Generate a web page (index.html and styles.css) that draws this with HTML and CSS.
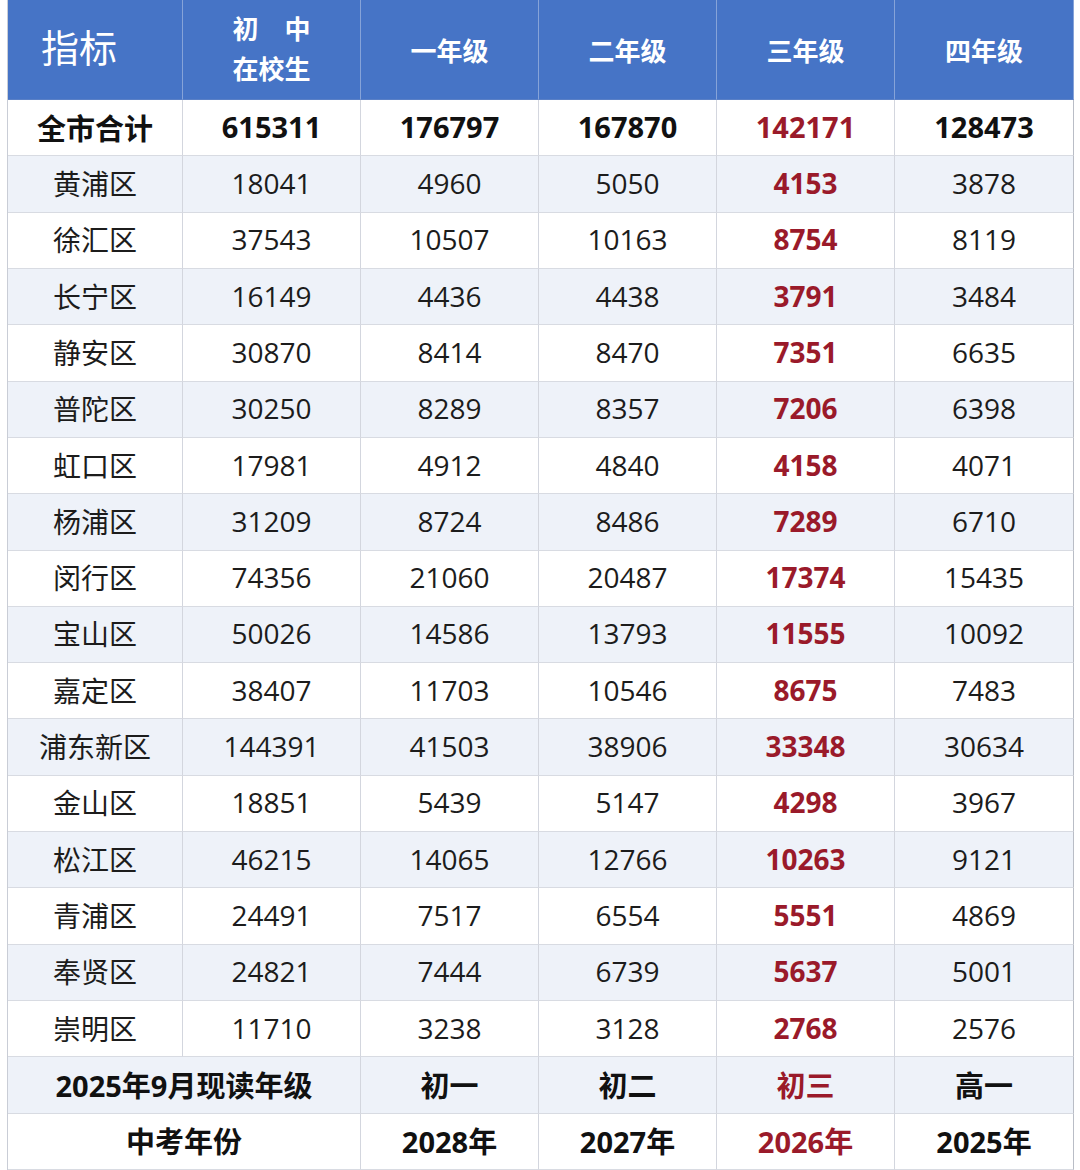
FILE: index.html
```html
<!DOCTYPE html>
<html lang="zh-CN">
<head>
<meta charset="utf-8">
<link rel="stylesheet" href="styles.css">
</head>
<body>
<div class="sheet">
  <div class="c h first">指标</div>
  <div class="c h two"><span>初　中</span><span>在校生</span></div>
  <div class="c h">一年级</div>
  <div class="c h">二年级</div>
  <div class="c h">三年级</div>
  <div class="c h last">四年级</div>

  <div class="c b">全市合计</div><div class="c b">615311</div><div class="c b">176797</div><div class="c b">167870</div><div class="c b red">142171</div><div class="c b last">128473</div>

  <div class="c s">黄浦区</div><div class="c s">18041</div><div class="c s">4960</div><div class="c s">5050</div><div class="c s red">4153</div><div class="c s last">3878</div>
  <div class="c">徐汇区</div><div class="c">37543</div><div class="c">10507</div><div class="c">10163</div><div class="c red">8754</div><div class="c last">8119</div>
  <div class="c s">长宁区</div><div class="c s">16149</div><div class="c s">4436</div><div class="c s">4438</div><div class="c s red">3791</div><div class="c s last">3484</div>
  <div class="c">静安区</div><div class="c">30870</div><div class="c">8414</div><div class="c">8470</div><div class="c red">7351</div><div class="c last">6635</div>
  <div class="c s">普陀区</div><div class="c s">30250</div><div class="c s">8289</div><div class="c s">8357</div><div class="c s red">7206</div><div class="c s last">6398</div>
  <div class="c">虹口区</div><div class="c">17981</div><div class="c">4912</div><div class="c">4840</div><div class="c red">4158</div><div class="c last">4071</div>
  <div class="c s">杨浦区</div><div class="c s">31209</div><div class="c s">8724</div><div class="c s">8486</div><div class="c s red">7289</div><div class="c s last">6710</div>
  <div class="c">闵行区</div><div class="c">74356</div><div class="c">21060</div><div class="c">20487</div><div class="c red">17374</div><div class="c last">15435</div>
  <div class="c s">宝山区</div><div class="c s">50026</div><div class="c s">14586</div><div class="c s">13793</div><div class="c s red">11555</div><div class="c s last">10092</div>
  <div class="c">嘉定区</div><div class="c">38407</div><div class="c">11703</div><div class="c">10546</div><div class="c red">8675</div><div class="c last">7483</div>
  <div class="c s">浦东新区</div><div class="c s">144391</div><div class="c s">41503</div><div class="c s">38906</div><div class="c s red">33348</div><div class="c s last">30634</div>
  <div class="c">金山区</div><div class="c">18851</div><div class="c">5439</div><div class="c">5147</div><div class="c red">4298</div><div class="c last">3967</div>
  <div class="c s">松江区</div><div class="c s">46215</div><div class="c s">14065</div><div class="c s">12766</div><div class="c s red">10263</div><div class="c s last">9121</div>
  <div class="c">青浦区</div><div class="c">24491</div><div class="c">7517</div><div class="c">6554</div><div class="c red">5551</div><div class="c last">4869</div>
  <div class="c s">奉贤区</div><div class="c s">24821</div><div class="c s">7444</div><div class="c s">6739</div><div class="c s red">5637</div><div class="c s last">5001</div>
  <div class="c">崇明区</div><div class="c">11710</div><div class="c">3238</div><div class="c">3128</div><div class="c red">2768</div><div class="c last">2576</div>

  <div class="c s b span2">2025年9月现读年级</div><div class="c s b">初一</div><div class="c s b">初二</div><div class="c s b red">初三</div><div class="c s b last">高一</div>
  <div class="c b span2">中考年份</div><div class="c b">2028年</div><div class="c b">2027年</div><div class="c b red">2026年</div><div class="c b last">2025年</div>
</div>
</body>
</html>
```
FILE: styles.css
```css
html, body {
  margin: 0;
  padding: 0;
  background: #ffffff;
}
body {
  width: 1080px;
  height: 1170px;
  overflow: hidden;
  font-family: "Open Sans", "Noto Sans CJK SC", sans-serif;
}
.sheet {
  margin-left: 7px;
  width: 1066px;
  height: 1170px;
  display: grid;
  grid-template-columns: 175px 178px 178px 178px 178px 179px;
  grid-template-rows: 100px repeat(19, 1fr);
  border-left: 1.5px solid #c9cdd6;
  box-sizing: border-box;
}
.c {
  display: flex;
  align-items: center;
  justify-content: center;
  border-right: 1.5px solid #d3d6de;
  border-bottom: 1.5px solid #d8dbe2;
  font-size: 28px;
  color: #1c1c1c;
  background: #ffffff;
  white-space: nowrap;
  padding-bottom: 2px;
  box-sizing: border-box;
}
.c.last {
  border-right-color: #b9bdc6;
}
.s {
  background: #eef2f9;
}
.h {
  background: #4674c6;
  color: #ffffff;
  font-family: "Noto Sans CJK SC", sans-serif;
  font-weight: 700;
  font-size: 26px;
  border-right: 1.5px solid #86a3d8;
  border-bottom: 1px solid #5a80c6;
  padding-bottom: 0;
}
.h.last {
  border-right-color: #86a3d8;
}
.h.first {
  justify-content: flex-start;
  padding-left: 33px;
  padding-bottom: 8px;
  font-size: 38px;
  font-weight: 400;
}
.h.two {
  flex-direction: column;
  line-height: 40px;
  padding-bottom: 4px;
}
.b {
  font-weight: 700;
  color: #111111;
  font-size: 29px;
}
.red {
  color: #9a1a2a;
  font-weight: 700;
}
.span2 {
  grid-column: span 2;
}
```
